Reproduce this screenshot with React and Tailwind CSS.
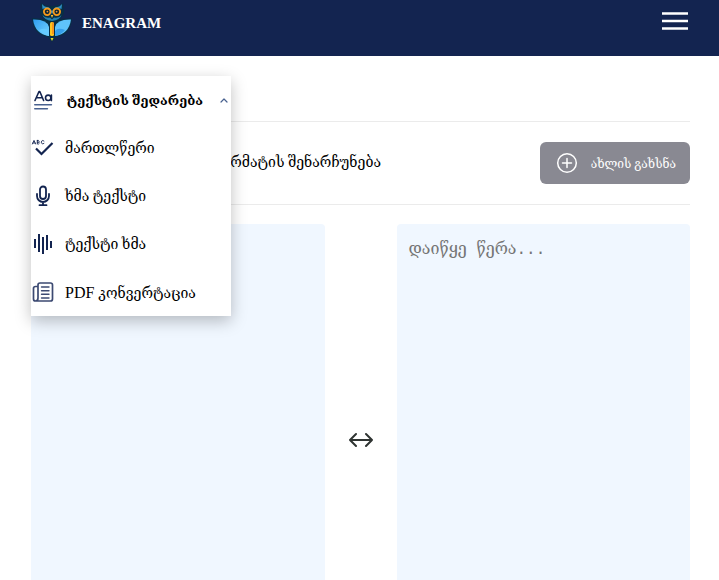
import React from "react";

const stroke = {
  fill: "none",
  stroke: "currentColor",
  strokeLinecap: "round",
  strokeLinejoin: "round",
};

function OwlLogo() {
  return (
    <svg className="h-10 w-10 shrink-0" viewBox="0 0 40 40" aria-hidden="true">
      <defs>
        <linearGradient id="wing" x1="0" y1="0" x2="1" y2="1">
          <stop offset="0" stopColor="#2f9df0" />
          <stop offset="1" stopColor="#74d2ff" />
        </linearGradient>
      </defs>
      <path d="M9 1 Q12 4 20 4 Q28 4 31 1 L32 9 Q32 15 27 17 L40 16 Q39 33 24 35 L20 40 L16 35 Q1 33 0 16 L13 17 Q8 15 8 9Z" fill="#082f45" />
      <path d="M10 2 Q12 5 17 5.5 L20 9 L23 5.5 Q28 5 30 2 L29.5 7 Q24 4 20 12 Q16 4 10.5 7Z" fill="#2f8fc4" />
      <path d="M10.5 13 Q13 16.5 18 15.5 L20 17.5 L22 15.5 Q27 16.5 29.5 13 Q28 18 20 19 Q12 18 10.5 13Z" fill="#2580ad" />
      <circle cx="15.2" cy="9.8" r="3.3" fill="#0c2434" stroke="#f79a1c" strokeWidth="1.8" />
      <circle cx="24.8" cy="9.8" r="3.3" fill="#0c2434" stroke="#f79a1c" strokeWidth="1.8" />
      <circle cx="15.4" cy="9.6" r="0.9" fill="#e5973c" />
      <circle cx="24.6" cy="9.6" r="0.9" fill="#e5973c" />
      <path d="M18.8 13 L20 16 L21.2 13Z" fill="#ffc331" />
      <path d="M1 17.5 Q15 17 17 25 V34 Q3 32 1 17.5Z" fill="url(#wing)" />
      <path d="M39 17.5 Q25 17 23 25 V34 Q37 32 39 17.5Z" fill="#5fc3fb" />
      <path d="M7 28 Q14 25 17 29 V34 Q11 33 7 28Z" fill="#65cbff" />
      <path d="M33 28 Q26 25 23 29 V34 Q29 33 33 28Z" fill="#359fec" />
      <rect x="18" y="20" width="4" height="14" rx="1.5" fill="#ffc51e" />
      <path d="M20 20 Q22 20 22 22 V32 H20Z" fill="#f7951d" />
      <path d="M18.5 36 H21.5 L20 39Z" fill="#e5dc32" />
    </svg>
  );
}

function CompareIcon() {
  return (
    <svg className="h-6 w-6" viewBox="0 0 24 24" {...stroke} strokeWidth="1.6" aria-hidden="true">
      <path d="M4 12.5 L8 3.5 H8.8 L12.6 12.5 M5.4 9.8 H11.2" />
      <circle cx="17.2" cy="9.8" r="2.7" />
      <path d="M20.4 7 V12.6" />
      <path d="M3.8 16.8 H20.4 M3.8 20.8 H16.4" stroke="#48618f" />
    </svg>
  );
}

function SpellIcon() {
  return (
    <svg className="h-6 w-6 overflow-visible" viewBox="0 0 24 24" {...stroke} aria-hidden="true">
      <path d="M1.4 8 L3 4.4 L4.6 8 M2 7 H4 M6.3 4.4 V8 H7.5 Q9.3 7.2 7.6 6.2 H6.3 M6.3 4.4 H7.4 Q9 5.3 7.6 6.2 M12.9 5 Q10.6 3.6 10.3 6.2 Q10.6 8.8 12.9 7.4" strokeWidth="0.9" />
      <path d="M5 12.5 L10.5 18 L21.5 7" strokeWidth="2.2" strokeLinecap="butt" strokeLinejoin="miter" />
    </svg>
  );
}

function MicIcon() {
  return (
    <svg className="h-6 w-6" viewBox="0 0 24 24" {...stroke} strokeWidth="1.8" aria-hidden="true">
      <rect x="9" y="2.5" width="6" height="12.5" rx="3" />
      <path d="M6 10 V12 A6 6 0 0 0 18 12 V10 M12 18 V21.2 M8.5 21.2 H15.5" />
    </svg>
  );
}

function WaveIcon() {
  return (
    <svg className="h-6 w-6" viewBox="0 0 24 24" {...stroke} strokeWidth="2" strokeLinecap="butt" aria-hidden="true">
      <path d="M4 7 V16 M8 2 V20 M12 5 V22 M16 3 V18 M20 9 V16" />
    </svg>
  );
}

function PdfIcon() {
  return (
    <svg className="h-6 w-6 text-[#3c4a72]" viewBox="0 0 24 24" {...stroke} strokeWidth="1.7" aria-hidden="true">
      <path d="M7 18 V5 Q7 3 9 3 H19.5 Q21.5 3 21.5 5 V19 Q21.5 21 19.5 21 H4.5 Q2.5 21 2.5 19 V8.5 Q2.5 6.5 4.5 6.5 H7 M7 18 Q7 21 4.5 21" />
      <path d="M10.5 7 H18 M10.5 10.7 H18 M10.5 14.3 H18 M10.5 18 H18" strokeWidth="1.4" />
    </svg>
  );
}

const tools = [
  { label: "მართლწერი", Icon: SpellIcon },
  { label: "ხმა ტექსტი", Icon: MicIcon },
  { label: "ტექსტი ხმა", Icon: WaveIcon },
  { prefix: "PDF", label: "კონვერტაცია", Icon: PdfIcon },
];

function ToolMenu() {
  return (
    <nav className="absolute top-0 left-0 z-10 w-[200px] bg-white shadow-[0_5px_15px_rgba(0,0,0,0.25)]">
      <button type="button" aria-expanded="true" className="flex h-12 w-full items-center gap-3 whitespace-nowrap text-[13px] font-bold">
        <span className="text-[#132450]"><CompareIcon /></span>
        <span className="flex-1 pt-[2px] text-left">ტექსტის შედარება</span>
        <svg className="mr-[3px] h-2 w-2 shrink-0 text-[#48618f]" viewBox="0 0 8 8" {...stroke} strokeWidth="1.2" aria-hidden="true">
          <path d="M1 6 L4 3 L7 6" />
        </svg>
      </button>
      {tools.map(({ prefix, label, Icon }) => (
        <a key={label} href="#" className="flex h-12 items-center gap-[10px] whitespace-nowrap text-sm">
          <span className="text-[#132450]"><Icon /></span>
          <span className="pt-[2px]">
            {prefix && <span className="text-base leading-5">{prefix} </span>}
            {label}
          </span>
        </a>
      ))}
    </nav>
  );
}

function TextPane({ label }) {
  return (
    <textarea
      aria-label={label}
      placeholder="დაიწყე წერა..."
      className="h-[432px] min-w-0 flex-1 resize-none rounded bg-[#f0f7ff] px-3 py-[14px] font-['Liberation_Mono','DejaVu_Serif',monospace] text-base placeholder:text-[#757575] outline-none"
    />
  );
}

export default function App() {
  return (
    <div className="h-screen overflow-hidden bg-white font-['Liberation_Serif','DejaVu_Serif',serif] text-black">
      <header className="flex h-14 items-center justify-between bg-[#132450] pr-[31px] pl-8">
        <a href="#" className="flex h-full items-start gap-[10px] pt-[2px] text-white">
          <OwlLogo />
          <span className="pt-[10px] text-[15px] leading-[22px] font-bold">ENAGRAM</span>
        </a>
        <button type="button" aria-label="Menu" className="mb-[14px] text-white">
          <svg className="h-5 w-[26px]" viewBox="0 0 26 20" stroke="currentColor" strokeWidth="2.6" aria-hidden="true">
            <path d="M0 2.5 H26 M0 10 H26 M0 17.5 H26" />
          </svg>
        </button>
      </header>
      <main className="pt-5 pr-[29px] pl-[31px]">
        <div className="relative h-[46px] border-b border-[#ebebeb]">
          <ToolMenu />
        </div>
        <div className="flex h-[83px] items-center justify-between border-b border-[#ebebeb]">
          <label className="flex w-[350px] items-center justify-end gap-3 text-sm whitespace-nowrap">
            <input type="checkbox" className="h-4 w-4" />
            ფორმატის შენარჩუნება
          </label>
          <button type="button" className="flex h-[42px] w-[150px] items-center justify-between rounded-md bg-[#898992] pr-[14px] pl-4 text-xs whitespace-nowrap text-white">
            <svg className="h-[22px] w-[22px]" viewBox="0 0 22 22" {...stroke} strokeWidth="1.5" aria-hidden="true">
              <circle cx="11" cy="11" r="9.3" />
              <path d="M11 6.5 V15.5 M6.5 11 H15.5" />
            </svg>
            <span className="pt-[2px]">ახლის გახსნა</span>
          </button>
        </div>
        <div className="mt-[19px] flex items-center">
          <TextPane label="პირველი ტექსტი" />
          <div className="flex w-[72px] justify-center">
            <svg className="h-6 w-6 text-[#2f3432]" viewBox="0 0 24 24" {...stroke} strokeWidth="2" aria-hidden="true">
              <path d="M1 12 H23 M7 6 L1 12 L7 18 M17 6 L23 12 L17 18" />
            </svg>
          </div>
          <TextPane label="მეორე ტექსტი" />
        </div>
      </main>
    </div>
  );
}
